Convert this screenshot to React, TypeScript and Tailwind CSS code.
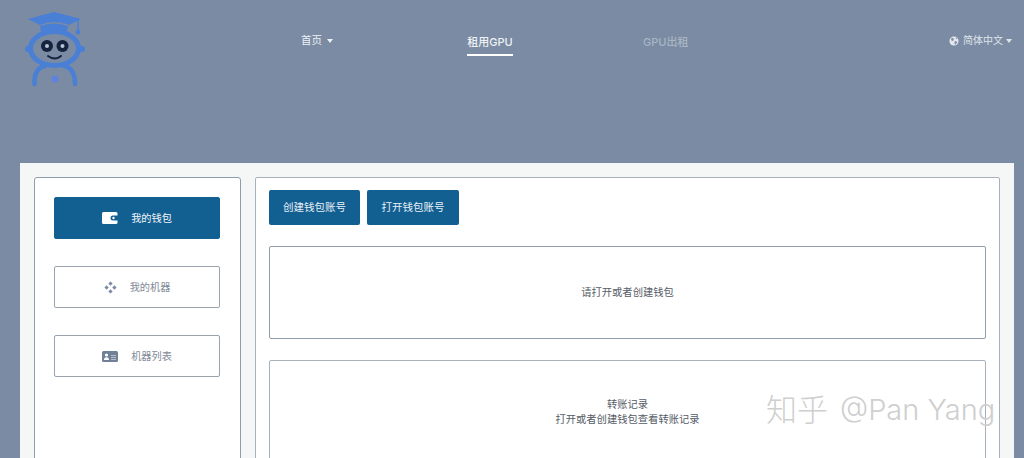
import React from "react";

const font = "font-['Inter','Noto_Sans_CJK_SC',sans-serif]";

const Logo = () => (
  <svg viewBox="0 0 60 76" className="h-[76px] w-[60px]" fill="none">
    <path d="M3 8 L29 1 L56 8 L44 14 Q29 8 15 14 Z" fill="#4a7fd6" />
    <path d="M15 15 Q29 10 43 15 L42 21 Q29 16 16 21 Z" fill="#4a7fd6" />
    <path d="M53 9 L53 21" stroke="#4a7fd6" strokeWidth="1.500" />
    <circle cx="53" cy="21" r="2.500" fill="#4a7fd6" />
    <ellipse cx="29.500" cy="37.500" rx="24" ry="17" stroke="#4a7fd6" strokeWidth="5" />
    <circle cx="3" cy="38" r="3" fill="#4a7fd6" />
    <circle cx="57" cy="38" r="3" fill="#4a7fd6" />
    <circle cx="22" cy="35" r="6" fill="#16233f" />
    <circle cx="37.500" cy="35" r="6" fill="#16233f" />
    <circle cx="22" cy="35" r="2" fill="#b9c4d6" />
    <circle cx="37.500" cy="35" r="2" fill="#b9c4d6" />
    <path d="M23 45 Q30 50 36 45" stroke="#16233f" strokeWidth="2" strokeLinecap="round" />
    <path d="M9.500 73 Q9 57 20 55 M50 73 Q50 57 39 55" stroke="#4a7fd6" strokeWidth="4.500" strokeLinecap="round" />
    <circle cx="30" cy="68" r="3.500" fill="#5f82e0" />
  </svg>
);

const Caret = ({ className = "" }: { className?: string }) => (
  <span
    className={`inline-block h-0 w-0 border-x-[3.5px] border-t-[4px] border-x-transparent border-t-current ${className}`}
  />
);

const Globe = () => (
  <svg viewBox="0 0 12 12" className="h-[10px] w-[10px]">
    <circle cx="6" cy="6" r="5.500" fill="#e4e8ee" />
    <path d="M3 2 L6 3 L5 6 L2.500 5 Z M7 6 L10 7 L8 10.500 L6.500 9 Z M8 1.500 L10 3 L8.500 4 Z" fill="#7a8ba3" />
  </svg>
);

const WalletIcon = () => (
  <svg viewBox="0 0 16 12" className="h-[12px] w-[16px]">
    <path
      fillRule="evenodd"
      d="M1.500 0 H14 A1.500 1.500 0 0 1 15.500 1.500 V3.500 H11 A2.500 2.500 0 0 0 11 8.500 H15.500 V10.500 A1.500 1.500 0 0 1 14 12 H1.500 A1.500 1.500 0 0 1 0 10.500 V1.500 A1.500 1.500 0 0 1 1.500 0 Z"
      fill="#ffffff"
    />
    <circle cx="11.500" cy="6" r="1.200" fill="#ffffff" />
  </svg>
);

const NodesIcon = () => (
  <svg viewBox="0 0 14 14" className="h-[13px] w-[13px]" fill="#7a8ba3">
    <path d="M7 0.500 L9.300 2.800 L7 5.100 L4.700 2.800 Z" />
    <path d="M2.800 4.700 L5.100 7 L2.800 9.300 L0.500 7 Z" />
    <path d="M11.200 4.700 L13.500 7 L11.200 9.300 L8.900 7 Z" />
    <path d="M7 8.900 L9.300 11.200 L7 13.500 L4.700 11.200 Z" />
  </svg>
);

const CardIcon = () => (
  <svg viewBox="0 0 16 11" className="h-[11px] w-[16px]">
    <rect width="16" height="11" rx="1.500" fill="#6f8097" />
    <circle cx="4.500" cy="4" r="1.600" fill="#ffffff" />
    <path d="M2 9 Q2 6.300 4.500 6.300 Q7 6.300 7 9 Z" fill="#ffffff" />
    <path d="M9 4.500 H14 M9 6.500 H14 M9 8.500 H14" stroke="#c8d0da" strokeWidth="0.800" />
  </svg>
);

const SideButton = ({
  icon,
  label,
  active,
  gap,
}: {
  icon: React.ReactNode;
  label: string;
  active?: boolean;
  gap: string;
}) => (
  <div
    className={`flex h-[42px] w-[166px] items-center justify-center rounded-[2px] border text-[10.200px] ${gap} ${
      active
        ? "border-[#125f92] bg-[#125f92] text-[#f2f6f9]"
        : "border-[#98a3ae] bg-white text-[#7f8a97]"
    }`}
  >
    {icon}
    <span className="pt-[2px]">{label}</span>
  </div>
);

const WalletButton = ({ label, width }: { label: string; width: string }) => (
  <div
    className={`flex h-[35px] items-center justify-center rounded-[2px] bg-[#125f92] text-[10.500px] text-[#e8f0f5] ${width}`}
  >
    {label}
  </div>
);

export default function App() {
  return (
    <div className={`relative h-[458px] w-[1024px] overflow-hidden bg-[#7a8ba3] ${font}`}>
      <header className="flex h-[163px] items-start">
        <div className="ml-[25px] mt-[11px] w-[60px]">
          <Logo />
        </div>
        <nav className="mt-[33px] flex items-start text-[11px]">
          <div className="ml-[216px] flex w-[35px] items-center gap-[5px] text-[#eef1f5]">
            <span className="whitespace-nowrap text-[10.500px]">首页</span>
            <Caret />
          </div>
          <div className="ml-[131px] flex h-[23px] w-[46px] items-start justify-center whitespace-nowrap border-b-2 border-white pt-px font-medium text-[#eef1f5]">
            租用GPU
          </div>
          <div className="ml-[130px] w-[47px] whitespace-nowrap pt-px font-medium text-[#a9b5c4]">GPU出租</div>
          <div className="ml-[259px] flex items-center gap-[4px] whitespace-nowrap text-[10px] text-[#dfe4ea]">
            <Globe />
            <span>简体中文</span>
            <Caret className="-ml-px" />
          </div>
        </nav>
      </header>

      <main className="ml-[20px] flex h-[295px] w-[994px] gap-[14px] bg-[#f5f6f6] pl-[14px] pt-[14px]">
        <aside className="h-[400px] w-[207px] rounded-[3px] border border-[#8f9dac] bg-white pl-[19px] pt-[19px]">
          <div className="flex flex-col gap-[27px]">
            <SideButton active icon={<WalletIcon />} label="我的钱包" gap="gap-[13px]" />
            <SideButton icon={<NodesIcon />} label="我的机器" gap="gap-[13px]" />
            <SideButton icon={<CardIcon />} label="机器列表" gap="gap-[13px]" />
          </div>
        </aside>

        <section className="h-[400px] w-[745px] rounded-[2px] border border-[#a7b1bb] bg-white pl-[13px] pt-[12px]">
          <div className="flex gap-[7px]">
            <WalletButton label="创建钱包账号" width="w-[91px]" />
            <WalletButton label="打开钱包账号" width="w-[92px]" />
          </div>
          <div className="mt-[21px] flex h-[93px] w-[717px] items-center justify-center rounded-[2px] border border-[#8f9dac] text-[10.300px] text-[#555c66]">
            请打开或者创建钱包
          </div>
          <div className="mt-[21px] flex h-[200px] w-[717px] flex-col items-center rounded-[2px] border border-[#a7b1bb] pt-[36px] text-[10.300px] leading-[15px] text-[#555c66]">
            <span>转账记录</span>
            <span>打开或者创建钱包查看转账记录</span>
          </div>
        </section>
      </main>

      <div className="absolute left-[766px] top-[390px] flex items-center gap-[12px] whitespace-nowrap leading-[40px] font-light text-[#cfcfcf]">
        <span className="text-[31px]">知乎</span>
        <span className="text-[29px]">@Pan Yang</span>
      </div>
    </div>
  );
}
